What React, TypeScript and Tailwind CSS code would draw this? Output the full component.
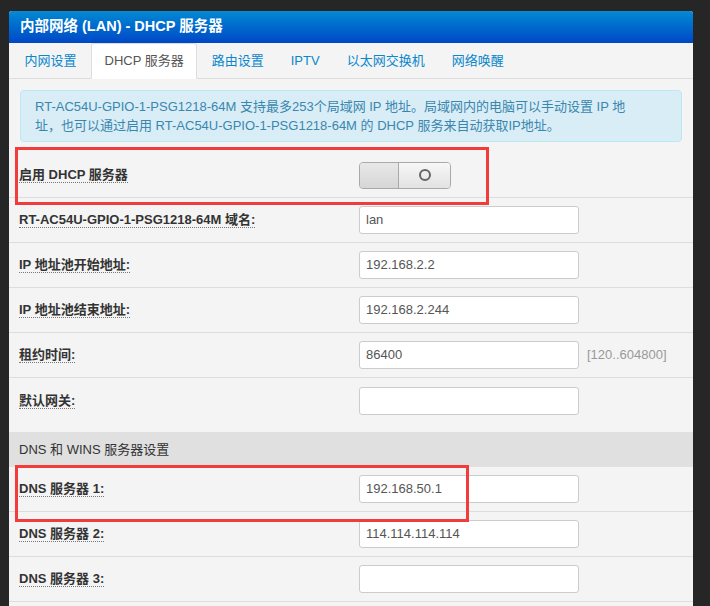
import React from "react";

const font = { fontFamily: '"Liberation Sans", Arial, "Noto Sans CJK SC", sans-serif' };

function Label({ children }: { children: React.ReactNode }) {
  return (
    <span className="font-bold text-[13px] text-[#333] border-b border-dotted border-[#777] leading-[15px]">
      {children}
    </span>
  );
}

function Input({ value }: { value?: string }) {
  return (
    <div className="w-[220px] h-[28px] bg-white border border-[#ccc] rounded-[3px] flex items-center pl-[6px] text-[13px] text-[#555]">
      {value}
    </div>
  );
}

function Row({ label, children, last }: { label: string; children: React.ReactNode; last?: boolean }) {
  return (
    <div className={`flex h-[45px] items-center ${last ? "" : "border-b border-[#ddd]"}`}>
      <div className="w-[340px] pl-[10px] flex items-center">
        <Label>{label}</Label>
      </div>
      <div className="pl-[10px] flex items-center gap-[8px]">{children}</div>
    </div>
  );
}

function Toggle() {
  return (
    <div className="w-[92px] h-[27px] border border-[#a9a9a9] rounded-[4px] flex overflow-hidden">
      <div className="w-[39px] h-full bg-gradient-to-b from-[#e8e8e8] to-[#d6d6d6] border-r border-[#a9a9a9]" />
      <div className="flex-1 h-full bg-gradient-to-b from-[#f7f7f7] to-[#e2e2e2] flex items-center justify-center">
        <div className="w-[12px] h-[12px] rounded-full border-2 border-[#666]" />
      </div>
    </div>
  );
}

export default function App() {
  const tabs = ["内网设置", "DHCP 服务器", "路由设置", "IPTV", "以太网交换机", "网络唤醒"];
  return (
    <div className="relative w-[710px] h-[606px] bg-[#262626] overflow-hidden" style={font}>
      <div className="ml-[9px] pt-[11px] w-[684px]">
        <div className="bg-[#f4f4f4] h-[620px] rounded-t-[3px] overflow-hidden">
          <div className="h-[32px] bg-gradient-to-b from-[#0a89d4] to-[#0046c5] flex items-center pl-[11px] text-white font-bold text-[14.5px]">
            内部网络 (LAN) - DHCP 服务器
          </div>
          <div className="h-[36px] border-b border-[#ddd] flex items-end pl-[3px]">
            {tabs.map((t, i) =>
              i === 1 ? (
                <div
                  key={t}
                  className="h-[36px] -mb-[1px] px-[12.5px] mr-[2px] bg-white border border-[#ddd] border-b-white rounded-t-[3px] flex items-center text-[13px] text-[#555]"
                >
                  {t}
                </div>
              ) : (
                <div key={t} className="h-[35px] px-[12.5px] mr-[2px] flex items-center text-[13px] text-[#0a88cc]">
                  {t}
                </div>
              )
            )}
          </div>
          <div className="mx-[11px] mt-[11px] bg-[#d9edf7] border border-[#bce8f1] rounded-[4px] px-[14px] py-[6px] text-[13px] leading-[19px] text-[#3a87ad] whitespace-nowrap">
            RT-AC54U-GPIO-1-PSG1218-64M 支持最多253个局域网 IP 地址。局域网内的电脑可以手动设置 IP 地
            <br />
            址，也可以通过启用 RT-AC54U-GPIO-1-PSG1218-64M 的 DHCP 服务来自动获取IP地址。
          </div>
          <div className="mt-[11px]">
            <Row label="启用 DHCP 服务器">
              <Toggle />
            </Row>
            <Row label="RT-AC54U-GPIO-1-PSG1218-64M 域名:">
              <Input value="lan" />
            </Row>
            <Row label="IP 地址池开始地址:">
              <Input value="192.168.2.2" />
            </Row>
            <Row label="IP 地址池结束地址:">
              <Input value="192.168.2.244" />
            </Row>
            <Row label="租约时间:">
              <Input value="86400" />
              <span className="text-[13px] text-[#999]">[120..604800]</span>
            </Row>
            <Row label="默认网关:" last>
              <Input />
            </Row>
          </div>
          <div className="mt-[9px]">
            <div className="h-[35px] bg-[#e0e0e0] flex items-center pl-[10px] text-[13px] text-[#333]">
              DNS 和 WINS 服务器设置
            </div>
            <Row label="DNS 服务器 1:">
              <Input value="192.168.50.1" />
            </Row>
            <Row label="DNS 服务器 2:">
              <Input value="114.114.114.114" />
            </Row>
            <Row label="DNS 服务器 3:">
              <Input />
            </Row>
          </div>
        </div>
      </div>
      <div className="absolute left-[15px] top-[147px] w-[474px] h-[58px] border-[3px] border-[#f23b3b]" />
      <div className="absolute left-[15px] top-[465px] w-[454px] h-[57px] border-[3px] border-[#f23b3b]" />
    </div>
  );
}
